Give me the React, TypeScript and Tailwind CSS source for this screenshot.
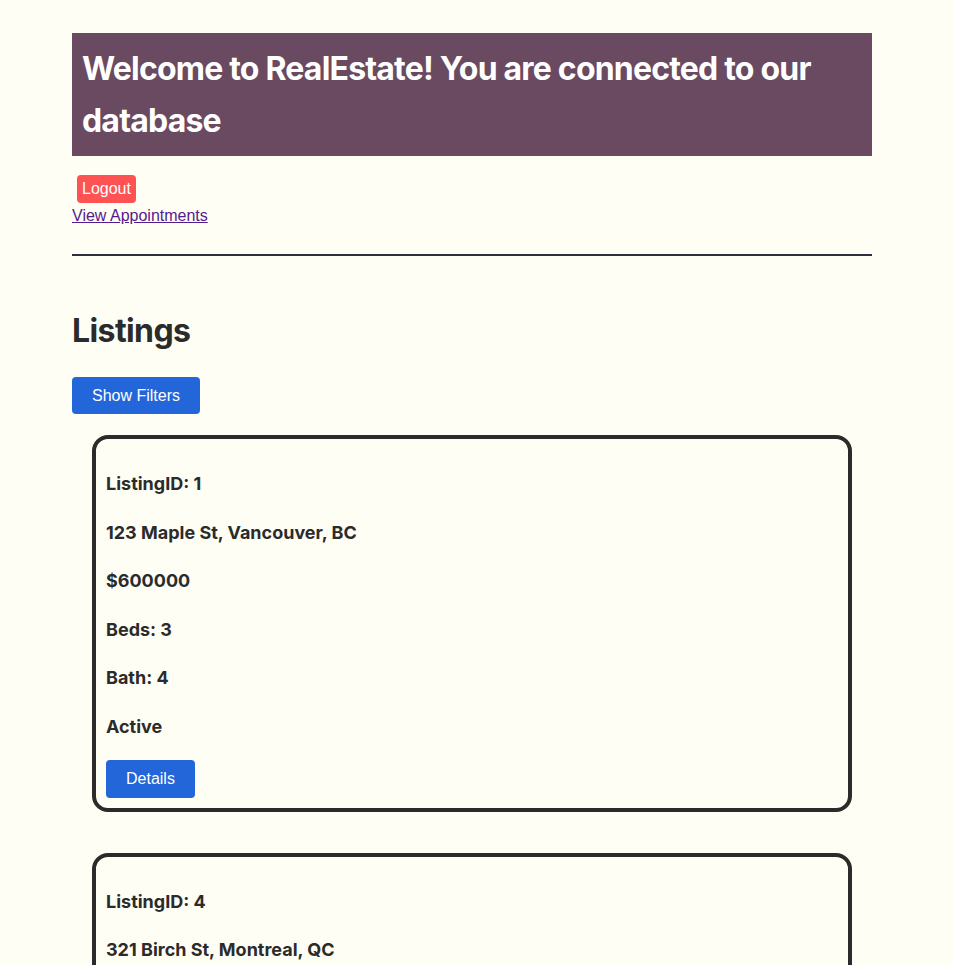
import React from 'react';

// Listado de propiedades
interface Listing {
  id: number;
  address: string;
  price: number;
  beds: number;
  bath: number;
  status: string;
}

const listings: Listing[] = [
  { id: 1, address: '123 Maple St, Vancouver, BC', price: 600000, beds: 3, bath: 4, status: 'Active' },
  { id: 4, address: '321 Birch St, Montreal, QC', price: 450000, beds: 2, bath: 1, status: 'Active' },
];

const ListingCard: React.FC<{ listing: Listing }> = ({ listing }) => (
  <div className="border-4 border-[#2b2b2b] rounded-[16px] px-[10px] pb-[10px] pt-[30px]">
    <p className="text-[18px] leading-[30.6px] font-bold">ListingID: {listing.id}</p>
    <p className="text-[18px] leading-[30.6px] font-bold mt-[18px]">{listing.address}</p>
    <p className="text-[18px] leading-[30.6px] font-bold mt-[18px]">${listing.price}</p>
    <p className="text-[18px] leading-[30.6px] font-bold mt-[18px]">Beds: {listing.beds}</p>
    <p className="text-[18px] leading-[30.6px] font-bold mt-[18px]">Bath: {listing.bath}</p>
    <p className="text-[18px] leading-[30.6px] font-bold mt-[18px]">{listing.status}</p>
    <button className="mt-[17px] px-5 py-[10px] rounded-[4px] bg-[#2366d9] text-white text-[16px] leading-[18px] font-['Liberation_Sans',Arial,sans-serif]">
      Details
    </button>
  </div>
);

export default function App() {
  return (
    <div className="min-h-screen bg-[#fffef5] text-[#2b2b2b] font-['Inter',sans-serif]">
      <div className="w-[800px] ml-[72px] pt-[33px] pb-10">
        <h1 className="bg-[#6a4a60] text-white text-[32px] leading-[51.5px] font-bold px-[10px] py-[10px] tracking-[-0.8px]">
          Welcome to RealEstate! You are connected to our database
        </h1>

        <div className="mt-[19px] font-['Liberation_Sans',Arial,sans-serif]">
          <button className="ml-[5px] px-[5px] py-[5px] rounded-[4px] bg-[#ff5252] text-white text-[16px] leading-[18px]">
            Logout
          </button>
          <div className="mt-[1px]">
            <a href="#" className="text-[16px] leading-[18px] text-[#551a8b] underline">
              View Appointments
            </a>
          </div>
        </div>

        <hr className="mt-[26px] border-0 h-[2px] bg-[#2a2f3a]" />

        <h2 className="mt-[55px] text-[32px] leading-[40px] font-bold tracking-[-0.6px]">Listings</h2>

        <button className="mt-[26px] px-5 py-[10px] rounded-[4px] bg-[#2366d9] text-white text-[16px] leading-[17px] font-['Liberation_Sans',Arial,sans-serif]">
          Show Filters
        </button>

        <div className="mt-[21px] mx-5 flex flex-col gap-[41px]">
          {listings.map((l) => (
            <ListingCard key={l.id} listing={l} />
          ))}
        </div>
      </div>
    </div>
  );
}
